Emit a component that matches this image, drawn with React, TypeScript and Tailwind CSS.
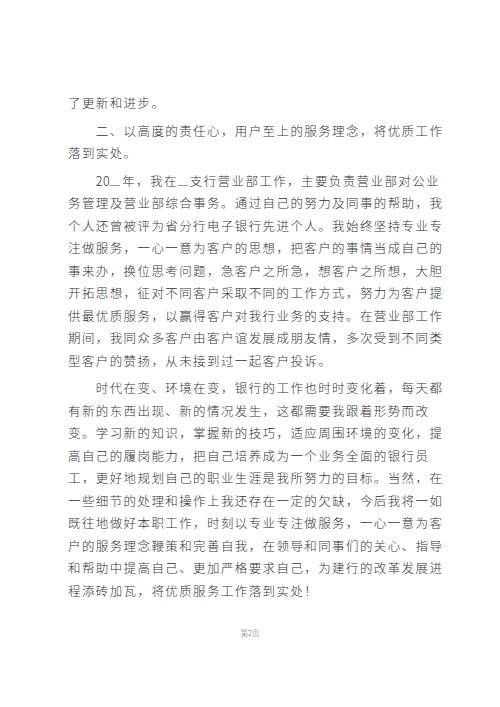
const font = {
  fontFamily: '"Noto Sans CJK SC", "Noto Sans", sans-serif',
};

const indent = "\u3000\u3000";

const paragraphs: string[][] = [
  ["了更新和进步。"],
  [indent + "二、以高度的责任心，用户至上的服务理念，将优质工作", "落到实处。"],
  [
    "@first",
    "务管理及营业部综合事务。通过自己的努力及同事的帮助，我",
    "个人还曾被评为省分行电子银行先进个人。我始终坚持专业专",
    "注做服务，一心一意为客户的思想，把客户的事情当成自己的",
    "事来办，换位思考问题，急客户之所急，想客户之所想，大胆",
    "开拓思想，征对不同客户采取不同的工作方式，努力为客户提",
    "供最优质服务，以赢得客户对我行业务的支持。在营业部工作",
    "期间，我同众多客户由客户谊发展成朋友情，多次受到不同类",
    "型客户的赞扬，从未接到过一起客户投诉。",
  ],
  [
    indent + "时代在变、环境在变，银行的工作也时时变化着，每天都",
    "有新的东西出现、新的情况发生，这都需要我跟着形势而改",
    "变。学习新的知识，掌握新的技巧，适应周围环境的变化，提",
    "高自己的履岗能力，把自己培养成为一个业务全面的银行员",
    "工，更好地规划自己的职业生涯是我所努力的目标。当然，在",
    "一些细节的处理和操作上我还存在一定的欠缺，今后我将一如",
    "既往地做好本职工作，时刻以专业专注做服务，一心一意为客",
    "户的服务理念鞭策和完善自我，在领导和同事们的关心、指导",
    "和帮助中提高自己、更加严格要求自己，为建行的改革发展进",
    "程添砖加瓦，将优质服务工作落到实处！",
  ],
];

// underlined blank as in a fill-in form
function Blank() {
  return <span className="mr-[2px] inline-block h-[10px] w-[10px] border-b border-[#9a9a9a] align-baseline" />;
}

function Line({ text }: { text: string }) {
  if (text === "@first") {
    return (
      <div className="whitespace-nowrap">
        {indent}
        <span className="tracking-[0.5px]">20</span>
        <Blank />
        年，我在
        <Blank />
        支行营业部工作，主要负责营业部对公业
      </div>
    );
  }
  return <div className="whitespace-nowrap">{text}</div>;
}

export default function App() {
  return (
    <div
      className="flex h-[707px] w-[500px] flex-col bg-white pt-[92px] text-[12.5px] leading-[22.5px] font-light tracking-[1.4px] text-[#333333]"
      style={font}
    >
      <div className="flex flex-col gap-[5px] pl-[68px]">
        {paragraphs.map((lines, i) => (
          <div key={i}>
            {lines.map((t, j) => (
              <Line key={j} text={t} />
            ))}
          </div>
        ))}
      </div>
      <div className="mt-[26px] text-center text-[7.5px] leading-[10px] tracking-normal text-[#666666]">
        第2页
      </div>
    </div>
  );
}
